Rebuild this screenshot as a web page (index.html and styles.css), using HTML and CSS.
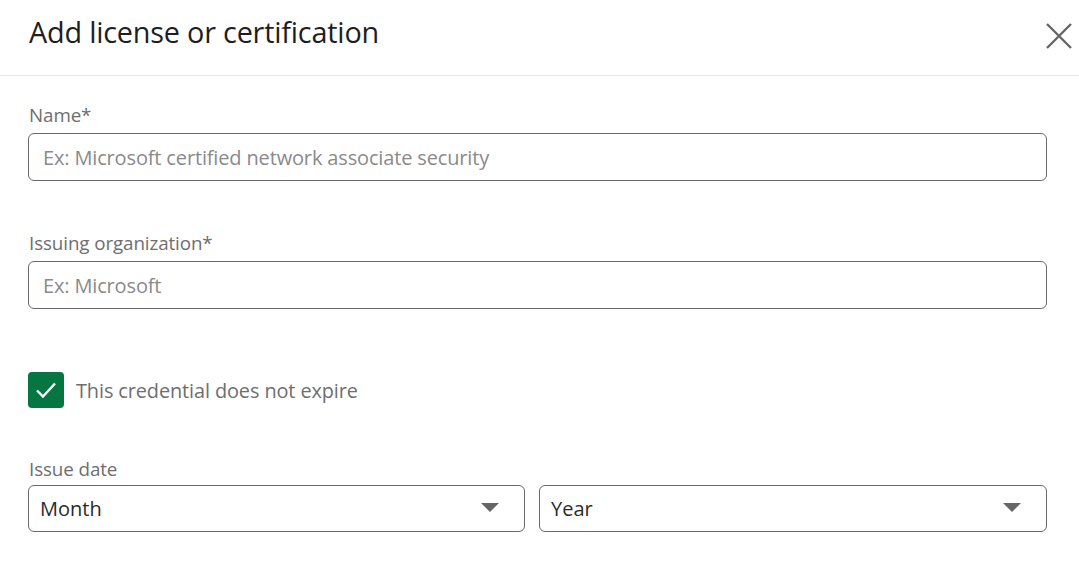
FILE: index.html
```html
<!DOCTYPE html>
<html>
<head>
<meta charset="utf-8">
<link rel="stylesheet" href="styles.css">
</head>
<body>
<div class="modal">
  <header class="head">
    <h1 class="title">Add license or certification</h1>
    <button class="close" aria-label="Dismiss">
      <svg width="26" height="26" viewBox="0 0 26 26"><path d="M1 1L25 25M25 1L1 25" stroke="#666" stroke-width="2.4" fill="none"/></svg>
    </button>
  </header>
  <div class="body">
    <div class="field">
      <label class="label">Name*</label>
      <div class="input"><span class="ph">Ex: Microsoft certified network associate security</span></div>
    </div>
    <div class="field field-org">
      <label class="label">Issuing organization*</label>
      <div class="input"><span class="ph">Ex: Microsoft</span></div>
    </div>
    <div class="check-row">
      <span class="box">
        <svg width="24" height="24" viewBox="0 0 24 24"><path d="M3 12.5L9 18.5L21 5.5" stroke="#fff" stroke-width="2.4" fill="none"/></svg>
      </span>
      <span class="check-text">This credential does not expire</span>
    </div>
    <div class="field field-date">
      <label class="label">Issue date</label>
      <div class="selects">
        <div class="select"><span class="val">Month</span><span class="caret"></span></div>
        <div class="select"><span class="val">Year</span><span class="caret"></span></div>
      </div>
    </div>
  </div>
</div>
</body>
</html>
```
FILE: styles.css
```css
* { box-sizing: border-box; }
html, body { margin: 0; padding: 0; background: #fff; }
body { font-family: "Open Sans", "Noto Sans", sans-serif; color: #191919; width: 1079px; height: 573px; overflow: hidden; }
.head {
  height: 76px;
  border-bottom: 1px solid #e8e8e8;
  display: flex;
  align-items: center;
  justify-content: space-between;
  padding: 0 7px 12px 29px;
}
.title { margin: 0; font-size: 28.8px; font-weight: 400; letter-spacing: -0.2px; color: #1e1e1e; }
.close { border: 0; background: none; padding: 0; width: 26px; height: 26px; margin-top: 8px; display: flex; }
.body { padding: 27px 32px 0 28px; }
.field { display: flex; flex-direction: column; }
.label { font-size: 18.8px; color: #6e6e6e; line-height: 24px; margin-left: 1px; margin-bottom: 6px; letter-spacing: -0.1px; }
.input {
  height: 48px;
  border: 1.5px solid #6a6a6a;
  border-radius: 6px;
  display: flex;
  align-items: center;
  padding-left: 14px;
}
.ph { font-size: 20px; color: #8a8a8a; letter-spacing: -0.15px; }
.field-org { margin-top: 50px; }
.check-row { display: flex; align-items: center; margin-top: 63px; gap: 12px; }
.box { width: 36px; height: 36px; background: #057642; border-radius: 4px; display: flex; align-items: center; justify-content: center; }
.check-text { font-size: 19.9px; color: #6e6e6e; letter-spacing: -0.1px; }
.field-date { margin-top: 49px; }
.field-date .label { margin-bottom: 4px; }
.selects { display: grid; grid-template-columns: 497px 508px; gap: 14px; }
.select {
  height: 47px;
  border: 1.5px solid #6a6a6a;
  border-radius: 6px;
  display: flex;
  align-items: center;
  justify-content: space-between;
  padding: 0 25px 0 11px;
}
.val { font-size: 20px; color: #2b2b2b; }
.caret { width: 0; height: 0; border-left: 9px solid transparent; border-right: 9px solid transparent; border-top: 9px solid #666; margin-top: -3px; }
```
